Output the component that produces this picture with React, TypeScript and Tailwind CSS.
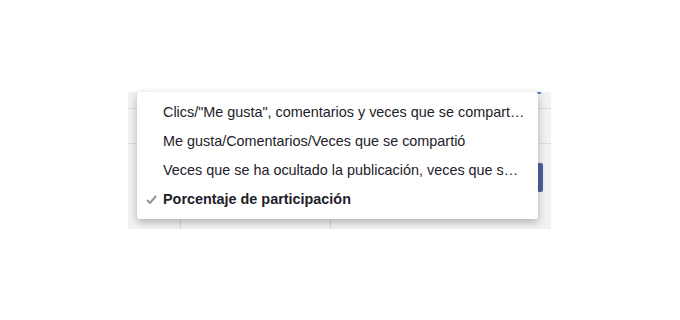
import React from "react";

const items = [
  { label: 'Clics/"Me gusta", comentarios y veces que se compartió la publicación', checked: false },
  { label: "Me gusta/Comentarios/Veces que se compartió", checked: false },
  { label: "Veces que se ha ocultado la publicación, veces que se ha denunciado como spam", checked: false },
  { label: "Porcentaje de participación", checked: true },
];

export default function App() {
  return (
    <div className="w-[680px] h-[320px] bg-white pt-[92px] pl-[128px] font-['Liberation_Sans',Arial,sans-serif]">
      {/* faded table behind the menu */}
      <div className="relative w-[423px] h-[137px] bg-[#f1f2f4] flex flex-col">
        <div className="h-[17px] border-b border-[#dcdee2] flex justify-end pr-[10px]">
          <div className="w-[4px] h-[2px] bg-[#5b7fd6]" />
        </div>
        <div className="h-[35px] border-b border-[#dcdee2]" />
        <div className="h-[72px] flex justify-end items-start pt-[19px] pr-[8px]">
          <div className="w-[6px] h-[29px] rounded-[2px] bg-[#4a63a0]" />
        </div>
        <div className="flex-1 flex">
          <div className="w-[52px]" />
          <div className="w-[150px] border-l border-[#d4d6da]" />
          <div className="flex-1 border-l border-[#d4d6da]" />
        </div>

        {/* dropdown menu */}
        <div className="absolute left-[9px] top-0 w-[401px] bg-white rounded-[3px] shadow-[0_3px_9px_rgba(0,0,0,0.28)] pt-[6px] pb-[5px] flex flex-col">
          {items.map((item) => (
            <div key={item.label} className="h-[29px] flex items-center pr-[13px]">
              <div className="w-[26px] shrink-0 flex justify-center pl-[2px]">
                {item.checked && (
                  <svg width="11" height="9" viewBox="0 0 11 9">
                    <path d="M1 5 L4 8 L10 1" fill="none" stroke="#90949c" strokeWidth="2" />
                  </svg>
                )}
              </div>
              <span
                className={
                  "block truncate text-[14.4px] text-[#1d2129] " +
                  (item.checked ? "font-bold" : "font-normal")
                }
              >
                {item.label}
              </span>
            </div>
          ))}
        </div>
      </div>
    </div>
  );
}
